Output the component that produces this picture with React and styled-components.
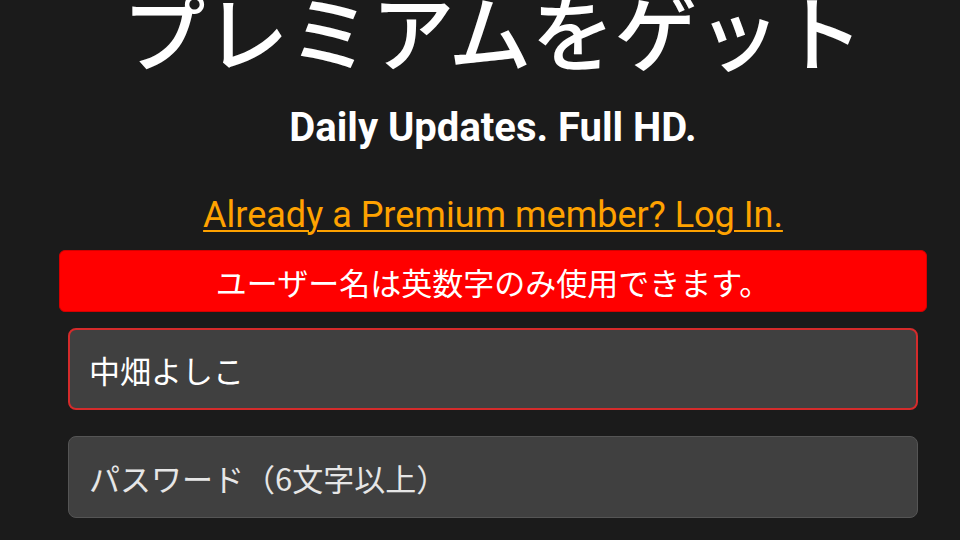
import React from "react";
import styled, { createGlobalStyle } from "styled-components";

const GlobalStyle = createGlobalStyle`
  html, body {
    margin: 0;
    padding: 0;
    background: #1b1b1b;
    overflow: hidden;
  }
  body {
    font-family: Roboto, "Noto Sans CJK JP", sans-serif;
  }
`;

const Page = styled.div`
  width: 960px;
  height: 540px;
  box-sizing: border-box;
  padding: 0 33px 0 59px;
  display: flex;
  flex-direction: column;
  align-items: stretch;
  background: #1b1b1b;
  overflow: hidden;
`;

const Title = styled.h1`
  margin: -21px 0 0;
  font-family: "Noto Sans CJK JP", sans-serif;
  font-weight: 500;
  font-size: 83px;
  line-height: 100px;
  color: #ffffff;
  text-align: center;
  white-space: nowrap;
`;

const Subtitle = styled.h2`
  margin: 27px 0 0;
  font-family: Roboto, sans-serif;
  font-weight: 700;
  font-size: 40px;
  line-height: 44px;
  color: #ffffff;
  text-align: center;
`;

const LoginLink = styled.a`
  align-self: center;
  margin-top: 45px;
  font-family: Roboto, sans-serif;
  font-size: 36px;
  line-height: 40px;
  color: #ffa200;
  text-decoration: underline;
  text-underline-offset: 3px;
  text-decoration-thickness: 2px;
  cursor: pointer;
`;

const ErrorBanner = styled.div`
  margin-top: 15px;
  height: 62px;
  flex-shrink: 0;
  border-radius: 6px;
  background: #ff0000;
  border: 1px solid #d40000;
  box-sizing: border-box;
  display: flex;
  align-items: center;
  justify-content: center;
  font-family: "Noto Sans CJK JP", sans-serif;
  font-size: 31px;
  color: #ffffff;
`;

const Form = styled.div`
  display: flex;
  flex-direction: column;
  gap: 26px;
  margin: 16px 9px 0;
`;

const Field = styled.div`
  height: 82px;
  flex-shrink: 0;
  box-sizing: border-box;
  border-radius: 8px;
  background: #404040;
  border: ${(p) => (p.$error ? "2px solid #d52b2b" : "1px solid #555555")};
  display: flex;
  align-items: center;
  padding-left: ${(p) => (p.$error ? "19px" : "20px")};
  font-family: "Noto Sans CJK JP", sans-serif;
  font-size: 31px;
  color: ${(p) => (p.$placeholder ? "#e6e6e6" : "#ffffff")};
`;

export default function App() {
  return (
    <>
      <GlobalStyle />
      <Page>
        <Title>プレミアムをゲット</Title>
        <Subtitle>Daily Updates. Full HD.</Subtitle>
        <LoginLink>Already a Premium member? Log In.</LoginLink>
        <ErrorBanner>ユーザー名は英数字のみ使用できます。</ErrorBanner>
        <Form>
          <Field $error>中畑よしこ</Field>
          <Field $placeholder>パスワード（6文字以上）</Field>
        </Form>
      </Page>
    </>
  );
}
